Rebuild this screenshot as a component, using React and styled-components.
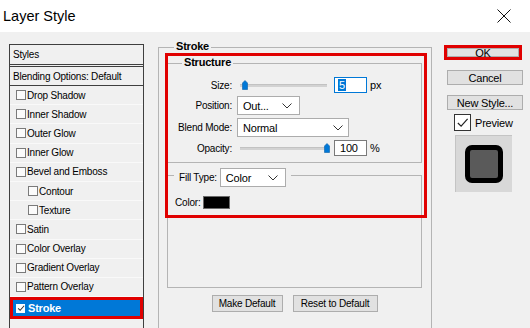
import React from 'react';
import styled, { createGlobalStyle } from 'styled-components';

const Global = createGlobalStyle`
  html, body { margin: 0; padding: 0; background: #f0f0f0; }
  body { font-family: "Liberation Sans", Arial, sans-serif; }
  * { box-sizing: border-box; }
`;

const Window = styled.div`
  width: 530px;
  height: 328px;
  overflow: hidden;
  display: flex;
  flex-direction: column;
  background: #f0f0f0;
  font-family: "Liberation Sans", Arial, sans-serif;
  font-size: 10px;
  letter-spacing: -0.2px;
  color: #000;
`;

const TitleBar = styled.div`
  height: 32px;
  flex: none;
  background: #fff;
  display: flex;
  align-items: center;
  justify-content: space-between;
  padding: 0 19px 0 3px;
`;

const Title = styled.span`
  font-size: 14.5px;
  letter-spacing: 0;
`;

const Body = styled.div`
  flex: 1;
  min-height: 0;
  display: flex;
  align-items: flex-start;
  padding: 12px 0 0 9px;
`;

/* ---------- Left styles list ---------- */
const StylesList = styled.div`
  width: 135px;
  height: 290px;
  flex: none;
  border: 1px solid #3f3f3f;
  display: flex;
  flex-direction: column;
`;

const ListHeader = styled.div`
  height: 22px;
  flex: none;
  display: flex;
  align-items: center;
  padding-left: 3px;
  border-bottom: 3px double #3f3f3f;
`;

const ListBlending = styled.div`
  height: 19px;
  flex: none;
  display: flex;
  align-items: center;
  padding-left: 3px;
  border-bottom: 1px solid #3f3f3f;
`;

const EffectRow = styled.div`
  height: ${p => (p.$selected ? '22px' : '19.2px')};
  flex: none;
  display: flex;
  align-items: center;
  gap: ${p => (p.$selected ? '3px' : '1px')};
  padding-left: ${p => (p.$selected ? '3px' : p.$indent ? '18px' : '6px')};
  border-bottom: 1px solid #f9f9f9;
  ${p =>
    p.$selected &&
    `
    background: #0078d7;
    border: 3px solid #e00000;
    color: #fff;
    font-weight: bold;
    font-size: 11px;
  `}
`;

const SmallBox = styled.span`
  width: 10px;
  height: 10px;
  flex: none;
  border: 1px solid #7a7a7a;
  background: #fbfbfb;
  display: flex;
  align-items: center;
  justify-content: center;
`;

const SelBox = styled.span`
  width: 9px;
  height: 9px;
  flex: none;
  background: #fff;
  display: flex;
  align-items: center;
  justify-content: center;
`;

/* ---------- Middle stroke group ---------- */
const StrokeGroup = styled.div`
  position: relative;
  width: 274px;
  height: 290px;
  flex: none;
  margin: 3px 0 0 14px;
  border: 1px solid #b4b4b4;
  padding: 0 9px 0 8px;
`;

const Legend = styled.div`
  width: fit-content;
  margin: -8px 0 0 ${p => p.$indent}px;
  padding: 0 2px;
  background: #f0f0f0;
  font-weight: bold;
  font-size: 11px;
  line-height: 13px;
`;

const GroupBox = styled.div`
  border: 1px solid #b4b4b4;
  margin-top: ${p => p.$top}px;
  ${p => p.$height && `height: ${p.$height}px;`}
`;

const StructureRows = styled.div`
  display: flex;
  flex-direction: column;
  gap: 3px;
  padding: 8px 0 6px 0;
`;

const FormRow = styled.div`
  display: flex;
  align-items: center;
  height: ${p => p.$h}px;
`;

const Label = styled.span`
  width: 64px;
  flex: none;
  text-align: right;
  margin-right: 5px;
`;

const SliderBox = styled.div`
  position: relative;
  width: 87px;
  height: 12px;
  margin-left: 3px;
  display: flex;
  align-items: center;
`;

const Track = styled.div`
  width: 100%;
  height: 3px;
  background: #d2d2d2;
  border-top: 1px solid #c2c2c2;
`;

const Thumb = styled.svg`
  position: absolute;
  top: 1px;
  width: 6px;
  height: 10px;
`;

const NumInput = styled.div`
  width: 33px;
  height: 16px;
  margin-left: 7px;
  background: #fff;
  border: 1px solid ${p => (p.$focused ? '#0078d7' : '#7a7a7a')};
  display: flex;
  align-items: center;
  padding-left: ${p => (p.$focused ? '3px' : '5px')};
  font-size: 11px;
`;

const Selected = styled.span`
  background: #0078d7;
  color: #fff;
  padding: 0 1px;
  line-height: 12px;
`;

const Unit = styled.span`
  margin-left: 3px;
  font-size: 11px;
`;

const Select = styled.div`
  width: ${p => p.$w}px;
  height: 19px;
  flex: none;
  background: #fff;
  border: 1px solid #acacac;
  display: flex;
  align-items: center;
  justify-content: space-between;
  padding: 0 ${p => p.$pr}px 0 5px;
  font-size: 11px;
`;

const FillLegend = styled.div`
  width: fit-content;
  height: 19px;
  margin: -8px 0 0 6px;
  padding: 0 5px;
  background: #f0f0f0;
  display: flex;
  align-items: center;
  gap: 3px;
`;

const ColorRow = styled.div`
  display: flex;
  align-items: center;
  gap: 3px;
  margin-top: 9px;
  padding-left: 7px;
`;

const Swatch = styled.span`
  width: 27px;
  height: 13px;
  background: #000;
  border: 1px solid #6a6a6a;
`;

const ButtonRow = styled.div`
  display: flex;
  justify-content: center;
  gap: 10px;
  margin-top: 7px;
`;

const Button = styled.div`
  width: ${p => p.$w}px;
  height: ${p => p.$h || 17}px;
  flex: none;
  background: #e1e1e1;
  border: 1px solid #adadad;
  display: flex;
  align-items: center;
  justify-content: center;
  font-size: ${p => p.$fs || 10}px;
`;

const RedOverlay = styled.div`
  position: absolute;
  left: 6px;
  top: 5px;
  width: 262px;
  height: 165px;
  border: 3px solid #e00000;
  pointer-events: none;
`;

/* ---------- Right column ---------- */
const RightCol = styled.div`
  width: 79px;
  flex: none;
  margin-left: 12px;
  display: flex;
  flex-direction: column;
  align-items: flex-start;
`;

const OkButton = styled(Button)`
  margin-top: 1px;
  border: 3px solid #e00000;
  box-shadow: inset 0 0 0 1px #adadad;
`;

const SideButton = styled(Button)`
  margin-top: 10px;
  margin-left: 3px;
`;

const PreviewRow = styled.div`
  display: flex;
  align-items: center;
  gap: 4px;
  margin: 4px 0 0 10px;
  font-size: 11px;
`;

const BigCheck = styled.span`
  width: 17px;
  height: 17px;
  border: 1px solid #333;
  background: #fff;
  display: flex;
  align-items: center;
  justify-content: center;
`;

const PreviewBox = styled.div`
  width: 57px;
  height: 57px;
  margin: 4px 0 0 11px;
  background: #d8d8d8;
  border-top: 1px solid #c4c4c4;
  border-left: 1px solid #c4c4c4;
  display: flex;
  align-items: center;
  justify-content: center;
`;

const PreviewSquare = styled.div`
  width: 38px;
  height: 38px;
  border: 5px solid #000;
  border-radius: 7px;
  background: #5a5a5a;
`;

const Chevron = () => (
  <svg width="10" height="6" viewBox="0 0 10 6">
    <polyline points="0.5,0.5 5,5 9.5,0.5" fill="none" stroke="#333" strokeWidth="1" />
  </svg>
);

const Check = ({ size = 13, color = '#222', w = 1.3 }) => (
  <svg width={size} height={size} viewBox="0 0 14 14">
    <polyline points="2,7.5 5.5,11 12.5,3" fill="none" stroke={color} strokeWidth={w} />
  </svg>
);

const Slider = ({ pos }) => (
  <SliderBox>
    <Track />
    <Thumb viewBox="0 0 6 10" style={{ left: pos }}>
      <path d="M0.5 3 L3 0.5 L5.5 3 V9.5 H0.5 Z" fill="#0078d7" stroke="#0a5fa8" strokeWidth="0.6" />
    </Thumb>
  </SliderBox>
);

const effects = [
  { name: 'Drop Shadow' },
  { name: 'Inner Shadow' },
  { name: 'Outer Glow' },
  { name: 'Inner Glow' },
  { name: 'Bevel and Emboss' },
  { name: 'Contour', indent: true },
  { name: 'Texture', indent: true },
  { name: 'Satin' },
  { name: 'Color Overlay' },
  { name: 'Gradient Overlay' },
  { name: 'Pattern Overlay' },
];

export default function App() {
  return (
    <Window>
      <Global />
      <TitleBar>
        <Title>Layer Style</Title>
        <svg width="14" height="14" viewBox="0 0 14 14">
          <path d="M0.5 0.5 L13.5 13.5 M13.5 0.5 L0.5 13.5" stroke="#111" strokeWidth="1" />
        </svg>
      </TitleBar>
      <Body>
        <StylesList>
          <ListHeader>Styles</ListHeader>
          <ListBlending>Blending Options: Default</ListBlending>
          {effects.map(e => (
            <EffectRow key={e.name} $indent={e.indent}>
              <SmallBox />
              <span>{e.name}</span>
            </EffectRow>
          ))}
          <EffectRow $selected>
            <SelBox>
              <Check size={8} color="#333" w={1.8} />
            </SelBox>
            <span>Stroke</span>
          </EffectRow>
        </StylesList>

        <StrokeGroup>
          <Legend $indent={7}>Stroke</Legend>
          <GroupBox $top={10}>
            <Legend $indent={14}>Structure</Legend>
            <StructureRows>
              <FormRow $h={16}>
                <Label>Size:</Label>
                <Slider pos={2} />
                <NumInput $focused>
                  <Selected>5</Selected>
                </NumInput>
                <Unit>px</Unit>
              </FormRow>
              <FormRow $h={19}>
                <Label>Position:</Label>
                <Select $w={63} $pr={7}>
                  <span>Out...</span>
                  <Chevron />
                </Select>
              </FormRow>
              <FormRow $h={19}>
                <Label>Blend Mode:</Label>
                <Select $w={112} $pr={5}>
                  <span>Normal</span>
                  <Chevron />
                </Select>
              </FormRow>
              <FormRow $h={16}>
                <Label>Opacity:</Label>
                <Slider pos={84} />
                <NumInput>100</NumInput>
                <Unit>%</Unit>
              </FormRow>
            </StructureRows>
          </GroupBox>
          <GroupBox $top={12} $height={113}>
            <FillLegend>
              <span>Fill Type:</span>
              <Select $w={66} $pr={7}>
                <span>Color</span>
                <Chevron />
              </Select>
            </FillLegend>
            <ColorRow>
              <span>Color:</span>
              <Swatch />
            </ColorRow>
          </GroupBox>
          <ButtonRow>
            <Button $w={71}>Make Default</Button>
            <Button $w={85}>Reset to Default</Button>
          </ButtonRow>
          <RedOverlay />
        </StrokeGroup>

        <RightCol>
          <OkButton $w={78} $h={15} $fs={11}>OK</OkButton>
          <SideButton $w={76} $h={15} $fs={11}>Cancel</SideButton>
          <SideButton $w={76} $h={15} $fs={11}>New Style...</SideButton>
          <PreviewRow>
            <BigCheck>
              <Check size={13} />
            </BigCheck>
            <span>Preview</span>
          </PreviewRow>
          <PreviewBox>
            <PreviewSquare />
          </PreviewBox>
        </RightCol>
      </Body>
    </Window>
  );
}
